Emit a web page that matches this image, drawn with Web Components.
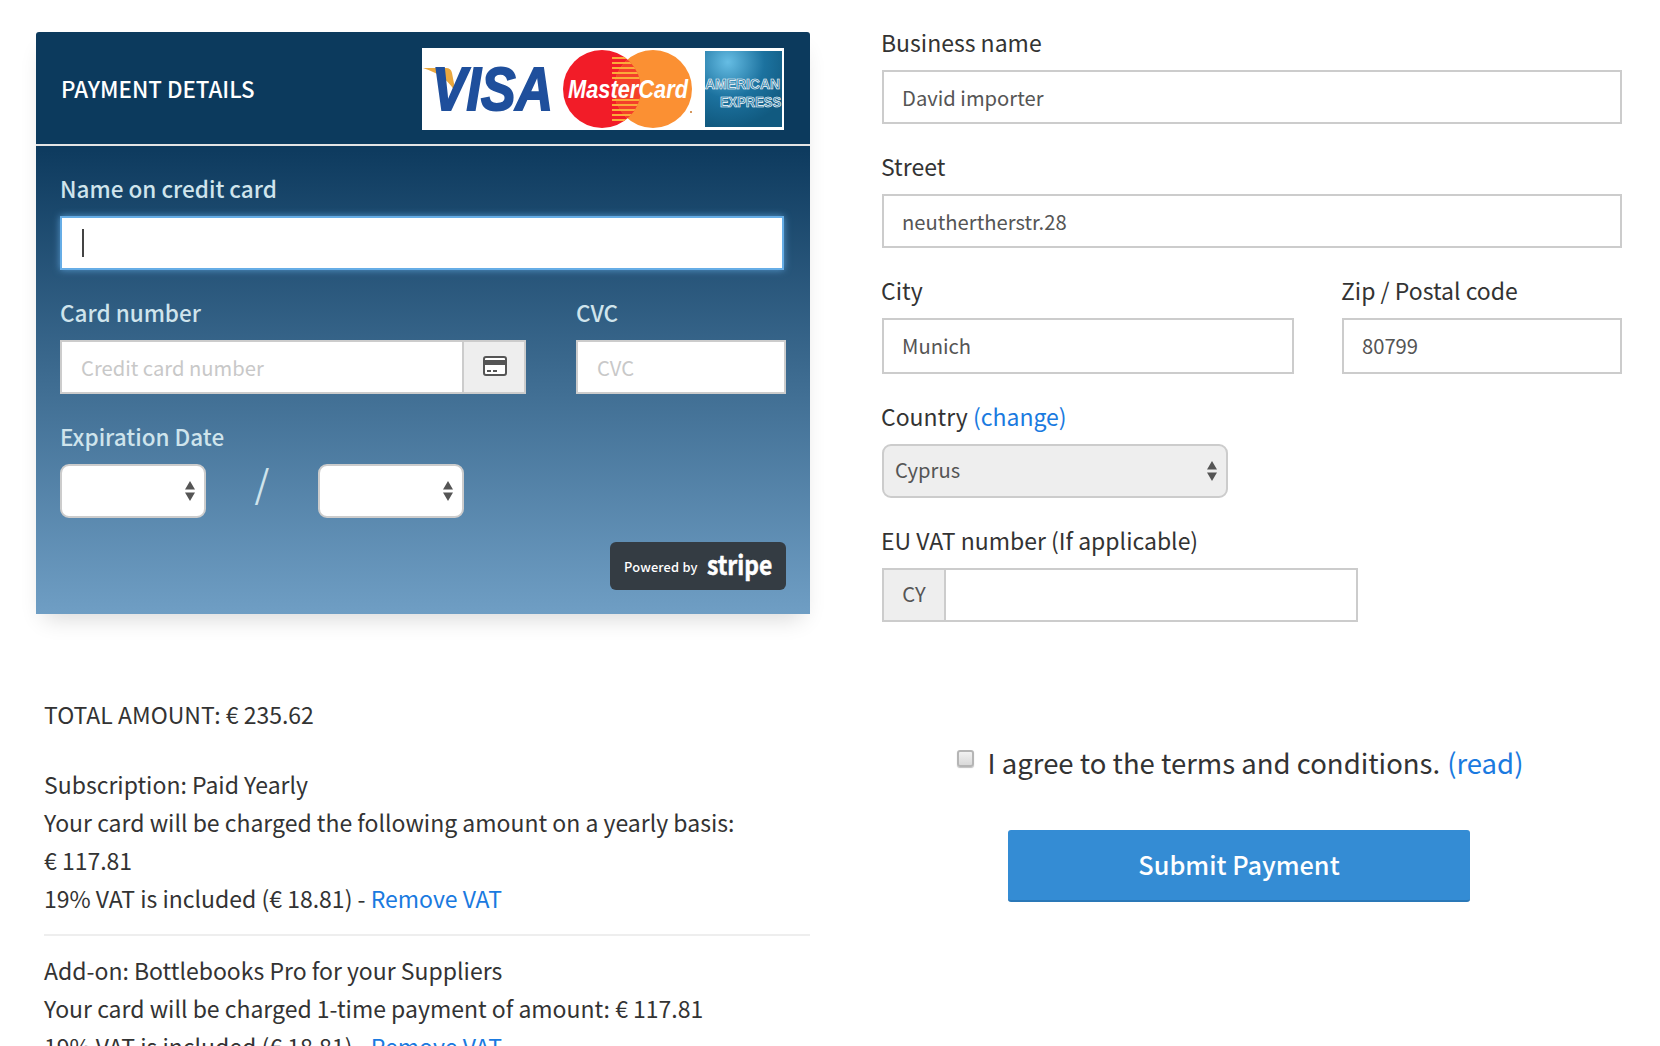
<!DOCTYPE html>
<html>
<head>
<meta charset="utf-8">
<title>Payment</title>
<style>
html, body { margin: 0; height: 1046px; overflow: hidden; background: #fff; }
body { font-family: "Noto Sans CJK SC", "Noto Sans", sans-serif; color: #333; }
</style>
</head>
<body>
<checkout-page></checkout-page>

<script>
const arrows = `<svg width="10" height="20" viewBox="0 0 10 20"><path d="M5 0L10 8.5H0Z M0 11.5H10L5 20Z" fill="#555"/></svg>`;

class FormField extends HTMLElement {
    connectedCallback() {
        this.attachShadow({ mode: 'open' });
        this.shadowRoot.innerHTML = `
            <style>
                :host { display: block; margin-bottom: var(--field-gap, 31px); }
                .label {
                    display: block;
                    height: 26px;
                    line-height: 22px;
                    margin: 0 0 13px var(--label-shift, 0);
                    font-size: var(--label-size, 23px);
                    font-weight: var(--label-weight, 400);
                    white-space: nowrap;
                    color: var(--label-color, #333);
                }
            </style>
            <span class="label"><slot name="label"></slot></span>
            <slot></slot>
        `;
    }
}

class TextBox extends HTMLElement {
    connectedCallback() {
        this.attachShadow({ mode: 'open' });
        const h = this.getAttribute('h') || 54;
        this.shadowRoot.innerHTML = `
            <style>
                :host { display: block; }
                .box {
                    box-sizing: border-box;
                    height: ${h}px;
                    display: flex;
                    align-items: center;
                    background: #fff;
                    border: 2px solid #ccc;
                    font-size: 20.2px;
                    color: #555;
                    white-space: nowrap;
                }
                .value { flex: 1; padding: 0 18px ${h > 54 ? 2 : 0}px; min-width: 0; }
                :host([placeholder]) .value { color: #c8c8c8; padding-left: 19px; }
                :host([focused]) .box {
                    border-color: #66ade6;
                    box-shadow: 0 0 7px rgba(102, 175, 233, .75);
                }
                .caret { display: block; width: 2px; height: 28px; background: #444; margin-left: 2px; }
                .addon {
                    align-self: stretch;
                    display: flex;
                    align-items: center;
                    justify-content: center;
                    background: #eee;
                    padding-bottom: 3px;
                }
                .addon.end { width: 60px; border-left: 2px solid #ccc; }
                .addon.end svg { margin-left: 2px; }
                .addon.start { width: 60px; border-right: 2px solid #ccc; }
            </style>
            <div class="box"><div class="value"><slot></slot></div></div>
        `;
        if (this.hasAttribute('addon-start')) {
            const el = document.createElement('div');
            el.className = 'addon start';
            el.textContent = this.getAttribute('addon-start');
            this.shadowRoot.querySelector('.box').prepend(el);
        }
        if (this.hasAttribute('card-icon')) {
            const el = document.createElement('div');
            el.className = 'addon end';
            el.innerHTML = `<svg width="24" height="20" viewBox="0 0 24 20"><rect x="1" y="1" width="22" height="18" rx="2" fill="#fff" stroke="#555" stroke-width="2"/><rect x="1" y="4" width="22" height="5" fill="#555"/><rect x="4" y="14" width="4" height="2" fill="#555"/><rect x="10" y="14" width="4" height="2" fill="#555"/></svg>`;
            this.shadowRoot.querySelector('.box').append(el);
        }
        if (this.hasAttribute('focused')) {
            const el = document.createElement('span');
            el.className = 'caret';
            this.shadowRoot.querySelector('.value').append(el);
        }
    }
}

class SelectBox extends HTMLElement {
    connectedCallback() {
        this.attachShadow({ mode: 'open' });
        this.shadowRoot.innerHTML = `
            <style>
                :host { display: block; }
                .box {
                    box-sizing: border-box;
                    width: var(--select-width, 146px);
                    height: 54px;
                    display: flex;
                    align-items: center;
                    justify-content: space-between;
                    padding: 0 9px 0 11px;
                    background: var(--select-bg, #fff);
                    border: 2px solid #ccc;
                    border-radius: 9px;
                    font-size: 20.2px;
                    color: #555;
                }
                span { padding-bottom: 3px; }
            </style>
            <div class="box"><span><slot></slot></span>${arrows}</div>
        `;
    }
}

class CardLogos extends HTMLElement {
    connectedCallback() {
        this.attachShadow({ mode: 'open' });
        this.shadowRoot.innerHTML = `
            <style>
                :host { display: block; width: 362px; height: 82px; margin-top: 2px; }
                svg { display: block; }
                text { font-family: "Liberation Sans", sans-serif; font-weight: 700; }
            </style>
            <svg width="362" height="82" viewBox="0 0 362 82">
                <defs>
                    <clipPath id="lens"><circle cx="180" cy="41" r="39"/></clipPath>
                    <radialGradient id="amex" cx="30%" cy="15%" r="85%">
                        <stop offset="0" stop-color="#66bde4"/>
                        <stop offset=".55" stop-color="#1c729f"/>
                        <stop offset="1" stop-color="#115a80"/>
                    </radialGradient>
                </defs>
                <rect width="362" height="82" fill="#fff"/>
                <path d="M1 20H24Q29 20 30 25L34 46Q26 28 1 20Z" fill="#eaa83f"/>
                <text x="10" y="62" font-size="61" font-style="italic" fill="#1f4f9c" stroke="#1f4f9c" stroke-width="2" textLength="121" lengthAdjust="spacingAndGlyphs">VISA</text>
                <circle cx="180" cy="41" r="39" fill="#f21c28"/>
                <circle cx="231" cy="41" r="39" fill="#fb9033"/>
                <g clip-path="url(#lens)">
                    <circle cx="231" cy="41" r="39" fill="#f4402a"/>
                    <path d="M190 10H222M190 15H222M190 20H222M190 25H222M190 30H222M190 52H222M190 57H222M190 62H222M190 67H222M190 72H222" stroke="#fbaa3a" stroke-width="2"/>
                </g>
                <text x="146" y="50" font-size="26" font-style="italic" fill="#fff" textLength="120" lengthAdjust="spacingAndGlyphs">MasterCard</text>
                <circle cx="269" cy="64" r="1" fill="#c9762a"/>
                <rect x="282.5" y="2.5" width="78" height="77" fill="url(#amex)" stroke="#fff"/>
                <g fill="#2a7ba6" stroke="#fff" stroke-width=".7">
                    <text x="283" y="41" font-size="15.5" textLength="75" lengthAdjust="spacingAndGlyphs">AMERICAN</text>
                    <text x="298" y="59" font-size="15.5" textLength="61" lengthAdjust="spacingAndGlyphs">EXPRESS</text>
                </g>
            </svg>
        `;
    }
}

class StripeBadge extends HTMLElement {
    connectedCallback() {
        this.attachShadow({ mode: 'open' });
        this.shadowRoot.innerHTML = `
            <style>
                :host {
                    display: flex;
                    align-items: center;
                    justify-content: space-between;
                    box-sizing: border-box;
                    width: 176px;
                    height: 48px;
                    padding: 0 15px 0 14px;
                    background: #343c43;
                    border-radius: 6px;
                    color: #fff;
                    white-space: nowrap;
                }
                .by { font-size: 12.8px; font-weight: 500; letter-spacing: .2px; }
                .name {
                    font-size: 26px;
                    font-weight: 700;
                    line-height: 30px;
                    margin-top: -5px;
                    -webkit-text-stroke: .5px #fff;
                    transform: scaleX(.88);
                    transform-origin: right center;
                }
            </style>
            <span class="by">Powered by</span><span class="name">stripe</span>
        `;
    }
}

class PaymentCard extends HTMLElement {
    connectedCallback() {
        this.attachShadow({ mode: 'open' });
        this.shadowRoot.innerHTML = `
            <style>
                :host {
                    display: block;
                    width: 774px;
                    height: 582px;
                    border-radius: 3px 3px 0 0;
                    box-shadow: 0 12px 22px -8px rgba(0, 0, 0, .16);
                    --label-color: #cfe4ec;
                    --label-weight: 500;
                    --label-size: 22.5px;
                }
                .head {
                    box-sizing: border-box;
                    height: 114px;
                    display: flex;
                    align-items: center;
                    justify-content: space-between;
                    padding: 0 26px 0 25px;
                    background: #0c3a5d;
                    border-bottom: 2px solid #e4e4e4;
                    border-radius: 3px 3px 0 0;
                }
                .title { font-size: 22.3px; font-weight: 500; color: #fff; }
                .body {
                    box-sizing: border-box;
                    height: 468px;
                    padding: 31px 24px 24px;
                    background: linear-gradient(#0d3a5e, #6f9ec4);
                }
                .row { display: flex; justify-content: space-between; }
                .num { width: 466px; }
                .cvc { width: 210px; }
                .full { width: 724px; }
                .expiry { display: flex; align-items: flex-start; }
                .slash { width: 112px; height: 54px; text-align: center; font-size: 38px; color: #cfe4ec; line-height: 36px; }
                .foot { display: flex; justify-content: flex-end; margin-top: -7px; }
            </style>
            <div class="head">
                <span class="title">PAYMENT DETAILS</span>
                <card-logos></card-logos>
            </div>
            <div class="body">
                <form-field class="full"><span slot="label">Name on credit card</span><text-box focused></text-box></form-field>
                <div class="row">
                    <form-field class="num"><span slot="label">Card number</span><text-box placeholder card-icon>Credit card number</text-box></form-field>
                    <form-field class="cvc"><span slot="label">CVC</span><text-box placeholder>CVC</text-box></form-field>
                </div>
                <form-field><span slot="label">Expiration Date</span>
                    <div class="expiry">
                        <select-box></select-box>
                        <span class="slash">/</span>
                        <select-box></select-box>
                    </div>
                </form-field>
                <div class="foot"><stripe-badge></stripe-badge></div>
            </div>
        `;
    }
}

class OrderSummary extends HTMLElement {
    connectedCallback() {
        this.attachShadow({ mode: 'open' });
        this.shadowRoot.innerHTML = `
            <style>
                :host {
                    display: block;
                    margin-top: 81px;
                    font-size: 23px;
                    line-height: 38px;
                    white-space: nowrap;
                    color: #333;
                }
                p { margin: 0 0 32px 8px; }
                p.plan { margin-bottom: 17px; }
                hr { margin: 0 0 15px 8px; border: 0; height: 2px; background: #eee; }
                a { color: #1a7ae0; text-decoration: none; }
            </style>
            <p>TOTAL AMOUNT: € 235.62</p>
            <p class="plan">Subscription: Paid Yearly<br>
            Your card will be charged the following amount on a yearly basis:<br>
            € 117.81<br>
            19% VAT is included (€ 18.81) - <a href="#">Remove VAT</a></p>
            <hr>
            <p class="plan">Add-on: Bottlebooks Pro for your Suppliers<br>
            Your card will be charged 1-time payment of amount: € 117.81<br>
            19% VAT is included (€ 18.81) - <a href="#">Remove VAT</a></p>
        `;
    }
}

class BillingForm extends HTMLElement {
    connectedCallback() {
        this.attachShadow({ mode: 'open' });
        this.shadowRoot.innerHTML = `
            <style>
                :host { display: block; margin-top: -1px; --label-shift: -1px; }
                .row { display: flex; justify-content: space-between; }
                .city { width: 412px; }
                .zip { width: 280px; }
                .vat { width: 476px; --field-gap: 0; }
                .country { --select-width: 346px; --select-bg: #eee; }
                a { color: #1a7ae0; text-decoration: none; }
            </style>
            <form-field><span slot="label">Business name</span><text-box>David importer</text-box></form-field>
            <form-field><span slot="label">Street</span><text-box>neuthertherstr.28</text-box></form-field>
            <div class="row">
                <form-field class="city"><span slot="label">City</span><text-box h="56">Munich</text-box></form-field>
                <form-field class="zip"><span slot="label">Zip / Postal code</span><text-box h="56">80799</text-box></form-field>
            </div>
            <form-field class="country"><span slot="label">Country <a href="#">(change)</a></span><select-box>Cyprus</select-box></form-field>
            <form-field class="vat"><span slot="label">EU VAT number (If applicable)</span><text-box addon-start="CY"></text-box></form-field>
        `;
    }
}

class SubmitBlock extends HTMLElement {
    connectedCallback() {
        this.attachShadow({ mode: 'open' });
        this.shadowRoot.innerHTML = `
            <style>
                :host {
                    display: flex;
                    flex-direction: column;
                    align-items: center;
                    margin-top: 120px;
                    padding-right: 26px;
                }
                .terms { display: flex; align-items: center; height: 40px; margin-left: 2px; font-size: 27.5px; color: #333; white-space: nowrap; }
                .box {
                    box-sizing: border-box;
                    width: 17px;
                    height: 17px;
                    margin: -8px 14px 0 0;
                    border: 2px solid #b5b5b5;
                    border-radius: 3px;
                    background: linear-gradient(#f2f2f2, #d9d9d9);
                    box-shadow: 0 1px 1px rgba(0, 0, 0, .25);
                }
                a { color: #1a7ae0; text-decoration: none; margin-left: 7px; }
                button {
                    box-sizing: border-box;
                    width: 462px;
                    height: 72px;
                    margin-top: 48px;
                    padding-bottom: 4px;
                    border: 0;
                    border-bottom: 2px solid #2a78b8;
                    border-radius: 3px;
                    background: #348cd4;
                    color: #fff;
                    font: 500 25.3px "Noto Sans CJK SC", "Noto Sans", sans-serif;
                }
            </style>
            <div class="terms"><span class="box"></span><span>I agree to the terms and conditions.</span><a href="#">(read)</a></div>
            <button type="button">Submit Payment</button>
        `;
    }
}

class CheckoutPage extends HTMLElement {
    connectedCallback() {
        this.attachShadow({ mode: 'open' });
        this.shadowRoot.innerHTML = `
            <style>
                :host {
                    display: grid;
                    grid-template-columns: 774px 740px;
                    column-gap: 72px;
                    padding: 32px 0 0 36px;
                }
            </style>
            <div>
                <payment-card></payment-card>
                <order-summary></order-summary>
            </div>
            <div>
                <billing-form></billing-form>
                <submit-block></submit-block>
            </div>
        `;
    }
}

customElements.define('form-field', FormField);
customElements.define('text-box', TextBox);
customElements.define('select-box', SelectBox);
customElements.define('card-logos', CardLogos);
customElements.define('stripe-badge', StripeBadge);
customElements.define('payment-card', PaymentCard);
customElements.define('order-summary', OrderSummary);
customElements.define('billing-form', BillingForm);
customElements.define('submit-block', SubmitBlock);
customElements.define('checkout-page', CheckoutPage);
</script>
</body>
</html>
